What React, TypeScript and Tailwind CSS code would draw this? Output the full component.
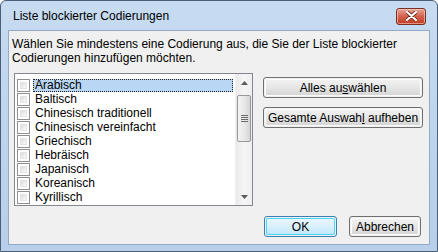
import React from "react";

const font = { fontFamily: '"Segoe UI", "Liberation Sans", Arial, sans-serif' };

const items = [
  "Arabisch",
  "Baltisch",
  "Chinesisch traditionell",
  "Chinesisch vereinfacht",
  "Griechisch",
  "Hebräisch",
  "Japanisch",
  "Koreanisch",
  "Kyrillisch",
];

const Checkbox = () => (
  <span className="w-[13px] h-[13px] shrink-0 border border-[#8f8f8f] bg-white p-[2px] flex">
    <span className="flex-1 bg-gradient-to-br from-[#dcdcdc] to-[#fbfbfb] border border-[#e4e4e4]" />
  </span>
);

const Scrollbar = () => (
  <div className="w-[17px] h-full flex flex-col bg-gradient-to-r from-[#e9e9e9] via-[#f5f5f5] to-[#eeeeee] border-l border-[#f0f0f0]">
    <div className="h-[17px] flex items-center justify-center">
      <svg width="7" height="4" viewBox="0 0 7 4">
        <path d="M0 4 L3.5 0 L7 4 Z" fill="#5c5c5c" />
      </svg>
    </div>
    <div className="mx-[1px] mt-[4px] h-[47px] rounded-[2px] border border-[#979797] bg-gradient-to-r from-[#f4f4f4] via-[#e8e8e8] to-[#d6d6d6] flex flex-col items-center justify-center gap-[1px]">
      <span className="w-[7px] h-[1px] bg-[#6b6b6b]" />
      <span className="w-[7px] h-[1px] bg-[#6b6b6b]" />
      <span className="w-[7px] h-[1px] bg-[#6b6b6b]" />
      <span className="w-[7px] h-[1px] bg-[#6b6b6b]" />
    </div>
    <div className="flex-1" />
    <div className="h-[17px] flex items-center justify-center">
      <svg width="7" height="4" viewBox="0 0 7 4">
        <path d="M0 0 L7 0 L3.5 4 Z" fill="#5c5c5c" />
      </svg>
    </div>
  </div>
);

const Button = ({
  children,
  w,
  primary,
}: {
  children: React.ReactNode;
  w: string;
  primary?: boolean;
}) => (
  <div
    className={`${w} h-[21px] rounded-[3px] border ${
      primary ? "border-[#3c7fb1]" : "border-[#707070]"
    } p-[1px]`}
  >
    <div
      className={`h-full rounded-[2px] flex items-center justify-center text-[12px] text-black ${
        primary
          ? "bg-gradient-to-b from-[#eaf6fd] via-[#d9f0fc] to-[#bee6fd] shadow-[inset_0_0_0_1px_#48d6f8]"
          : "bg-gradient-to-b from-[#f3f3f3] via-[#e6e6e6] to-[#d4d4d4] shadow-[inset_0_0_0_1px_#fcfcfc]"
      }`}
    >
      {children}
    </div>
  </div>
);

export default function App() {
  return (
    <div
      className="w-[438px] h-[252px] flex flex-col rounded-t-[6px] border border-[#4b5e75] bg-gradient-to-b from-[#c7dbf1] via-[#bed5ee] to-[#b7cfea] px-[7px] pb-[6px]"
      style={font}
    >
      {/* title bar */}
      <div className="h-[29px] flex items-center justify-between">
        <span className="pl-[5px] pt-[1px] text-[12px] text-black">Liste blockierter Codierungen</span>
        <div className="mr-[4px] mt-[1px] w-[30px] h-[17px] rounded-[3px] border border-[#7b2e22] bg-gradient-to-b from-[#e8a396] via-[#d2624d] to-[#c03a21] shadow-[inset_0_0_0_1px_rgba(255,220,210,0.55)] flex items-center justify-center">
          <svg width="11" height="10" viewBox="0 0 11 10">
            <path
              d="M1 1 L10 9 M10 1 L1 9"
              stroke="#5a1d12"
              strokeWidth="3.6"
              strokeLinecap="round"
            />
            <path
              d="M1 1 L10 9 M10 1 L1 9"
              stroke="#ffffff"
              strokeWidth="2.2"
              strokeLinecap="round"
            />
          </svg>
        </div>
      </div>

      {/* client area */}
      <div className="flex-1 bg-[#f0f0f0] border border-[#94a9c3] flex flex-col">
        <p className="pl-[3px] pt-[6px] text-[12px] leading-[14px] text-black">
          Wählen Sie mindestens eine Codierung aus, die Sie der Liste blockierter
          <br />
          Codierungen hinzufügen möchten.
        </p>

        <div className="flex pl-[5px] pt-[8px]">
          {/* list box */}
          <div className="w-[239px] h-[133px] border border-[#828790] bg-white flex">
            <div className="flex-1 pt-[4px] pl-[2px] overflow-hidden">
              {items.map((it, i) => (
                <div key={it} className="h-[14px] flex items-center">
                  <Checkbox />
                  <span
                    className={`ml-[3px] h-[13px] flex items-center px-[1px] text-[12px] text-black ${
                      i === 0
                        ? "w-[200px] bg-[#b9d6f4] border border-dotted border-[#1f1f1f]"
                        : "border border-transparent"
                    }`}
                  >
                    {it}
                  </span>
                </div>
              ))}
            </div>
            <Scrollbar />
          </div>

          {/* right buttons */}
          <div className="ml-[10px] flex flex-col gap-[9px] pt-[4px]">
            <Button w="w-[160px]">
              <span>
                Alles au<span className="underline">s</span>wählen
              </span>
            </Button>
            <Button w="w-[160px]">
              <span>
                Gesamte Auswah<span className="underline">l</span> aufheben
              </span>
            </Button>
          </div>
        </div>

        <div className="flex justify-end gap-[12px] pr-[8px] pt-[10px]">
          <Button w="w-[73px]" primary>
            OK
          </Button>
          <Button w="w-[72px]">Abbrechen</Button>
        </div>
      </div>
    </div>
  );
}
